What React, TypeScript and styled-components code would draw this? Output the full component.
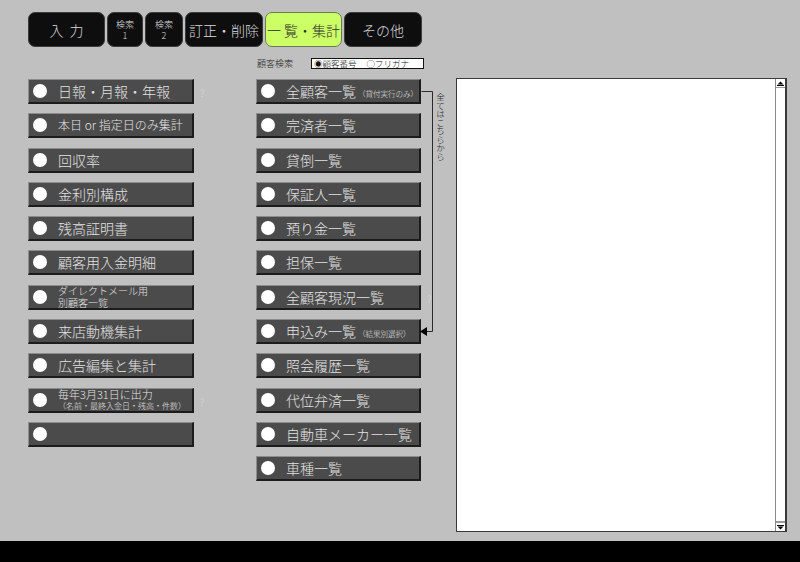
import React from 'react'
import styled, { createGlobalStyle, css } from 'styled-components'

const GlobalStyle = createGlobalStyle`
  html, body { margin: 0; padding: 0; background: #c0c0c0; }
  body { font-family: "Noto Sans CJK JP", "Noto Sans", sans-serif; font-weight: 300; }
`

type Item = {
  label?: string
  note?: string
  lines?: [string, string]
  size?: number
  sub?: number
  hint?: boolean
}

const leftItems: Item[] = [
  { label: '日報・月報・年報', hint: true },
  { label: '本日 or 指定日のみ集計', size: 12 },
  { label: '回収率' },
  { label: '金利別構成' },
  { label: '残高証明書' },
  { label: '顧客用入金明細' },
  { lines: ['ダイレクトメール用', '別顧客一覧'], size: 10, sub: 10 },
  { label: '来店動機集計' },
  { label: '広告編集と集計' },
  { lines: ['毎年3月31日に出力', '（名前・最終入金日・残高・件数）'], size: 11, sub: 8, hint: true },
  { label: '' },
]

const midItems: Item[] = [
  { label: '全顧客一覧', note: '（貸付実行のみ）' },
  { label: '完済者一覧' },
  { label: '貸倒一覧' },
  { label: '保証人一覧' },
  { label: '預り金一覧' },
  { label: '担保一覧' },
  { label: '全顧客現況一覧', hint: true },
  { label: '申込み一覧', note: '（結果別選択）' },
  { label: '照会履歴一覧' },
  { label: '代位弁済一覧' },
  { label: '自動車メーカー一覧' },
  { label: '車種一覧' },
]

const Page = styled.div`
  width: 800px;
  height: 562px;
  display: flex;
  flex-direction: column;
  background: #c0c0c0;
  overflow: hidden;
`
const Main = styled.div`
  flex: 1;
  padding: 12px 0 0 28px;
`
const Footer = styled.div`
  height: 21px;
  background: #000;
`

const TabBar = styled.div`
  display: flex;
  gap: 2px;
  height: 35px;
`
const Tab = styled.div<{ $w: number; $active?: boolean; $small?: boolean }>`
  width: ${p => p.$w}px;
  box-sizing: border-box;
  border-radius: 7px;
  background: #0e0e0e;
  border: 1px solid #3c3c3c;
  color: #dcdcdc;
  display: flex;
  flex-direction: column;
  align-items: center;
  justify-content: center;
  font-size: 14px;
  font-weight: 300;
  white-space: nowrap;
  ${p => p.$small && css`
    font-size: 9px;
    line-height: 11px;
  `}
  ${p => p.$active && css`
    background: #ccff66;
    border-color: #6e7a55;
    color: #2a2a2a;
  `}
`

const Content = styled.div`
  display: flex;
  align-items: flex-start;
  margin-top: 10px;
`
const Column = styled.div<{ $w: number; $top: number }>`
  position: relative;
  width: ${p => p.$w}px;
  padding-top: ${p => p.$top}px;
  display: flex;
  flex-direction: column;
  gap: 9.3px;
`
const Row = styled.div`
  display: flex;
  align-items: flex-start;
  height: 25px;
`
const ActionButton = styled.div<{ $w: number }>`
  width: ${p => p.$w}px;
  height: 25px;
  box-sizing: border-box;
  background: #4b4b4b;
  border-top: 1px solid #8c8c8c;
  border-left: 1px solid #8c8c8c;
  border-right: 2px solid #1c1c1c;
  border-bottom: 2px solid #1c1c1c;
  display: flex;
  align-items: center;
  padding-left: 4px;
  gap: 11px;
  color: #e2e2e2;
  white-space: nowrap;
`
const Dot = styled.span`
  width: 14px;
  height: 14px;
  flex: none;
  border-radius: 50%;
  background: #fff;
`
const Label = styled.span<{ $size: number }>`
  font-size: ${p => p.$size}px;
  line-height: 1;
`
const Note = styled.span`
  font-size: 7.5px;
  margin-left: 2px;
`
const TwoLines = styled.span<{ $size: number; $sub: number }>`
  display: flex;
  flex-direction: column;
  font-size: ${p => p.$size}px;
  line-height: ${p => p.$size + 0.5}px;
  span:last-child {
    font-size: ${p => p.$sub}px;
    line-height: ${p => p.$sub + 1}px;
  }
`
const Hint = styled.span`
  color: #dadada;
  font-size: 10px;
  margin: 6px 0 0 6px;
`

const SearchRow = styled.div`
  display: flex;
  align-items: center;
  height: 12px;
  margin-bottom: 0.7px;
  font-size: 9px;
  color: #222;
`
const SearchTitle = styled.span`
  width: 54px;
  padding-left: 1px;
`
const RadioBox = styled.div`
  width: 113px;
  height: 11px;
  box-sizing: border-box;
  border: 1px solid #111;
  background: #fff;
  display: flex;
  align-items: center;
  gap: 10px;
  padding-left: 2px;
  font-size: 8.5px;
  line-height: 1;
  color: #111;
`

const Bracket = styled.svg`
  position: absolute;
  left: 163px;
  top: 22px;
`
const VerticalNote = styled.span`
  position: absolute;
  left: 180px;
  top: 36px;
  writing-mode: vertical-rl;
  font-size: 8.5px;
  line-height: 1;
  color: #222;
`

const Panel = styled.div`
  margin-top: 21px;
  width: 331px;
  height: 454px;
  box-sizing: border-box;
  border: 1px solid #3a3a3a;
  border-right-width: 2px;
  background: #fff;
  display: flex;
`
const PanelBody = styled.div`
  flex: 1;
`
const Scrollbar = styled.div`
  width: 9px;
  border-left: 1px solid #8a8a8a;
  display: flex;
  flex-direction: column;
  justify-content: space-between;
`
const ScrollArrow = styled.div<{ $down?: boolean }>`
  height: 8px;
  display: flex;
  align-items: center;
  justify-content: center;
  ${p => (p.$down ? 'border-top: 2px solid #9a9a9a;' : 'border-bottom: 1px solid #9a9a9a;')}
`

const MenuButton = ({ item, w }: { item: Item; w: number }) => (
  <Row>
    <ActionButton $w={w}>
      <Dot />
      {item.lines ? (
        <TwoLines $size={item.size ?? 10} $sub={item.sub ?? 9}>
          <span>{item.lines[0]}</span>
          <span>{item.lines[1]}</span>
        </TwoLines>
      ) : (
        <Label $size={item.size ?? 14}>
          {item.label}
          {item.note && <Note>{item.note}</Note>}
        </Label>
      )}
    </ActionButton>
    {item.hint && <Hint>?</Hint>}
  </Row>
)

const Arrow = ({ down }: { down?: boolean }) => (
  <svg width="7" height="5" viewBox="0 0 7 5">
    {down ? (
      <>
        <rect x="0" y="0" width="7" height="1" fill="#000" />
        <polygon points="0.5,1.5 6.5,1.5 3.5,4.5" fill="#000" />
      </>
    ) : (
      <>
        <polygon points="3.5,0.5 6.5,3.5 0.5,3.5" fill="#000" />
        <rect x="0" y="4" width="7" height="1" fill="#000" />
      </>
    )}
  </svg>
)

const App = () => (
  <Page>
    <GlobalStyle />
    <Main>
      <TabBar>
        <Tab $w={77}>入&nbsp;&nbsp;力</Tab>
        <Tab $w={36} $small><span>検索</span><span>1</span></Tab>
        <Tab $w={38} $small><span>検索</span><span>2</span></Tab>
        <Tab $w={78}>訂正・削除</Tab>
        <Tab $w={77} $active>一&nbsp;覧・集計</Tab>
        <Tab $w={78}>その他</Tab>
      </TabBar>
      <Content>
        <Column $w={228} $top={22}>
          {leftItems.map((it, i) => <MenuButton key={i} item={it} w={166} />)}
        </Column>
        <Column $w={200} $top={0}>
          <SearchRow>
            <SearchTitle>顧客検索</SearchTitle>
            <RadioBox>
              <span>◉顧客番号</span>
              <span>○フリガナ</span>
            </RadioBox>
          </SearchRow>
          {midItems.map((it, i) => <MenuButton key={i} item={it} w={165} />)}
          <Bracket width="20" height="260" viewBox="0 0 20 260">
            <path d="M2.5 12.5 H13.5 V252.5 H7" stroke="#2a2a2a" strokeWidth="1" fill="none" />
            <polygon points="1,252.5 8,248 8,257" fill="#000" />
          </Bracket>
          <VerticalNote>全てはこちらから</VerticalNote>
        </Column>
        <Panel>
          <PanelBody />
          <Scrollbar>
            <ScrollArrow><Arrow /></ScrollArrow>
            <ScrollArrow $down><Arrow down /></ScrollArrow>
          </Scrollbar>
        </Panel>
      </Content>
    </Main>
    <Footer />
  </Page>
)

export default App
